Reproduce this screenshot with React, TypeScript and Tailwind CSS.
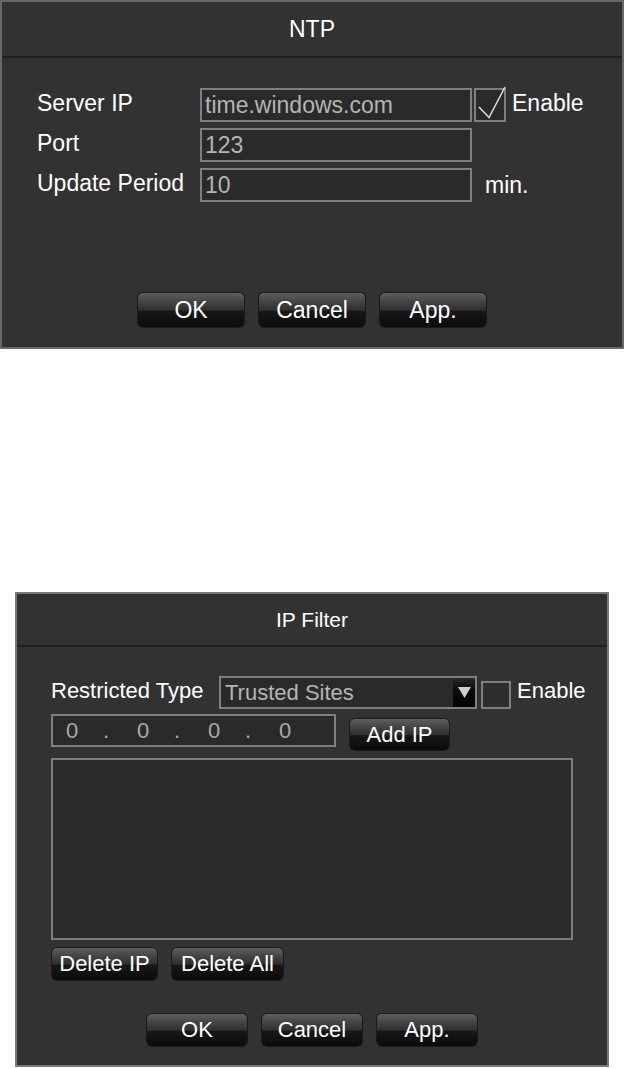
import React from "react";

const font = { fontFamily: '"Liberation Sans", Arial, sans-serif' };

function DvrButton({
  label,
  className = "",
}: {
  label: string;
  className?: string;
}) {
  return (
    <button
      className={`flex items-center justify-center rounded-[5px] text-white leading-none bg-[linear-gradient(to_bottom,#5f5f5f_0%,#454545_25%,#303030_50%,#171717_54%,#0b0b0b_100%)] shadow-[0_0_0_1px_#1a1a1a] ${className}`}
    >
      {label}
    </button>
  );
}

function TextBox({ value, className = "" }: { value: string; className?: string }) {
  return (
    <div
      className={`flex items-center border-2 border-[#7f7f7f] bg-[#2a2a2a] pl-[3px] text-[#b4b4b4] leading-none ${className}`}
    >
      {value}
    </div>
  );
}

function NtpDialog() {
  return (
    <div className="flex h-[349px] w-[624px] flex-col border-2 border-[#686868] bg-[#323232] text-[23px] text-white">
      <div className="flex h-[54px] items-center justify-center text-[23px]">NTP</div>
      <div className="h-[2px] bg-[#1f1f1f]" />

      <div className="flex flex-col gap-[6px] pl-[35px] pt-[30px]">
        <div className="flex items-center">
          <div className="w-[163px] pb-[4px] leading-none">Server IP</div>
          <TextBox value="time.windows.com" className="h-[34px] w-[272px] text-[23px]" />
          <div className="relative ml-[2px] h-[34px] w-[32px] border-2 border-[#7f7f7f] bg-[#2a2a2a]">
            <svg
              className="absolute left-[-2px] top-[-2px] overflow-visible"
              width="32"
              height="34"
              viewBox="0 0 32 34"
            >
              <polyline
                points="5,19 15,29.5 31,-1"
                fill="none"
                stroke="#dcdcdc"
                strokeWidth="1.6"
              />
            </svg>
          </div>
          <div className="ml-[6px] pb-[4px] leading-none">Enable</div>
        </div>
        <div className="flex items-center">
          <div className="w-[163px] pb-[4px] leading-none">Port</div>
          <TextBox value="123" className="h-[34px] w-[272px] text-[23px]" />
        </div>
        <div className="flex items-center">
          <div className="w-[163px] pb-[4px] leading-none">Update Period</div>
          <TextBox value="10" className="h-[34px] w-[272px] text-[23px]" />
          <div className="ml-[13px] leading-none">min.</div>
        </div>
      </div>

      <div className="mt-auto flex justify-center gap-[15px] pb-[20px]">
        <DvrButton label="OK" className="h-[34px] w-[106px] text-[23px]" />
        <DvrButton label="Cancel" className="h-[34px] w-[106px] text-[23px]" />
        <DvrButton label="App." className="h-[34px] w-[106px] text-[23px]" />
      </div>
    </div>
  );
}

function IpFilterDialog() {
  return (
    <div className="mx-[15px] flex h-[475px] w-[594px] flex-col border-2 border-[#787878] bg-[#323232] text-[22px] text-white">
      <div className="flex h-[51px] items-center justify-center text-[21px]">IP Filter</div>
      <div className="h-[2px] bg-[#1f1f1f]" />

      <div className="flex flex-col pl-[34px] pt-[29px]">
        <div className="flex items-center">
          <div className="w-[168px] pb-[4px] leading-none">Restricted Type</div>
          <div className="flex h-[33px] w-[258px] items-center border-2 border-[#7f7f7f] bg-[#2a2a2a] text-[#b4b4b4]">
            <span className="flex-1 pl-[4px] leading-none">Trusted Sites</span>
            <div className="flex h-full w-[22px] items-center justify-center bg-[linear-gradient(to_bottom,#2a2a2a_0%,#0a0a0a_40%,#050505_100%)]">
              <svg width="13" height="13" viewBox="0 0 13 13">
                <polygon points="0,1 13,1 6.5,12" fill="#cfcfcf" />
              </svg>
            </div>
          </div>
          <div className="ml-[4px] mt-[5px] h-[28px] w-[30px] border-2 border-[#7f7f7f] bg-[#2e2e2e]" />
          <div className="ml-[6px] pb-[4px] leading-none">Enable</div>
        </div>

        <div className="mt-[5px] flex items-start">
          <div className="flex h-[33px] w-[285px] items-center border-2 border-[#7f7f7f] bg-[#2a2a2a] text-[#a8a8a8] leading-none">
            <span className="ml-[13px] w-[37px]">0</span>
            <span className="w-[34px]">.</span>
            <span className="w-[37px]">0</span>
            <span className="w-[34px]">.</span>
            <span className="w-[37px]">0</span>
            <span className="w-[34px]">.</span>
            <span>0</span>
          </div>
          <DvrButton label="Add IP" className="ml-[14px] mt-[5px] h-[31px] w-[99px] text-[22px]" />
        </div>

        <div className="mt-[8px] h-[182px] w-[522px] border-2 border-[#7f7f7f] bg-[#2b2b2b]" />

        <div className="ml-[1px] mt-[8px] flex gap-[15px]">
          <DvrButton label="Delete IP" className="h-[32px] w-[105px] text-[22px]" />
          <DvrButton label="Delete All" className="h-[32px] w-[111px] text-[22px]" />
        </div>
      </div>

      <div className="mt-auto flex justify-center gap-[15px] pb-[19px]">
        <DvrButton label="OK" className="h-[32px] w-[100px] text-[22px]" />
        <DvrButton label="Cancel" className="h-[32px] w-[100px] text-[22px]" />
        <DvrButton label="App." className="h-[32px] w-[100px] text-[22px]" />
      </div>
    </div>
  );
}

export default function App() {
  return (
    <div className="min-h-[1069px] w-[624px] bg-white" style={font}>
      <NtpDialog />
      <div className="mt-[243px]">
        <IpFilterDialog />
      </div>
    </div>
  );
}
